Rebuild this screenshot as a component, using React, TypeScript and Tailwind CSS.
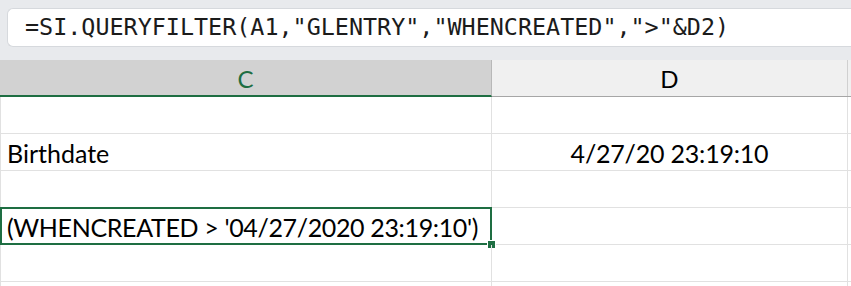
const cellFont = { fontFamily: "Lato, 'Open Sans', sans-serif" };

function Row({ c, d, tight = false, selected = false }: { c?: string; d?: string; tight?: boolean; selected?: boolean }) {
  return (
    <div className="flex h-[37px] border-b border-[#e1e1e1]">
      <div className="relative w-[492px] shrink-0 border-l border-r border-[#e1e1e1] flex items-center pl-[6px]">
        <span className={`text-[25px] text-black leading-none pt-[2px] whitespace-nowrap ${tight ? "tracking-[-0.35px]" : ""}`}>{c}</span>
        {selected && (
          <>
            <div className="absolute -top-px -left-px -right-px -bottom-px border-2 border-[#1e6e42] pointer-events-none" />
            <div className="absolute -right-[5px] -bottom-[5px] w-[9px] h-[9px] bg-[#1e6e42] border border-white" />
          </>
        )}
      </div>
      <div className="w-[356px] shrink-0 border-r border-[#e1e1e1] flex items-center justify-center">
        <span className="text-[25px] text-black leading-none pt-[2px] whitespace-nowrap tracking-[-0.2px]">{d}</span>
      </div>
      <div className="flex-1" />
    </div>
  );
}

export default function App() {
  return (
    <div className="w-[851px] h-[286px] overflow-hidden bg-white" style={cellFont}>
      {/* formula bar */}
      <div className="h-[60px] bg-[#e8eaed] pl-[7px] pt-[8px]">
        <div className="h-[39px] bg-white border border-[#d6d9dd] rounded-l-[6px] border-r-0 flex items-center pl-[17px]">
          <span
            className="text-[23.4px] text-[#1b1b1b] whitespace-nowrap leading-none"
            style={{ fontFamily: "'DejaVu Sans Mono', 'Liberation Mono', monospace" }}
          >
            =SI.QUERYFILTER(A1,"GLENTRY","WHENCREATED","&gt;"&amp;D2)
          </span>
        </div>
      </div>

      {/* column headers */}
      <div className="flex h-[37px] bg-[#f0f0f0] border-b border-[#a6a6a6]">
        <div className="w-[492px] shrink-0 bg-[#d2d2d2] border-r border-[#b8b8b8] border-b-2 border-b-[#1e6e42] -mb-px flex items-center justify-center">
          <span className="text-[24px] text-[#1e6e42] leading-none pt-[2px]">C</span>
        </div>
        <div className="w-[356px] shrink-0 border-r border-[#d0d0d0] flex items-center justify-center">
          <span className="text-[24px] text-black leading-none pt-[2px]">D</span>
        </div>
        <div className="flex-1" />
      </div>

      <Row />
      <Row c="Birthdate" d="4/27/20 23:19:10" />
      <Row />
      <Row c="(WHENCREATED > '04/27/2020 23:19:10')" tight selected />
      <Row />
      <Row />
    </div>
  );
}
